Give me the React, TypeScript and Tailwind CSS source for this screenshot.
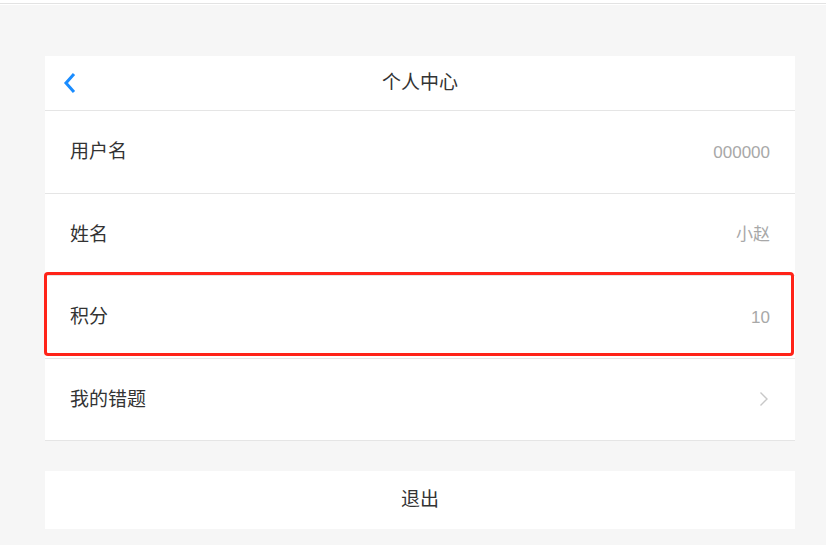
import React from "react";

const font = { fontFamily: '"Liberation Sans", "Noto Sans CJK SC", sans-serif' };

function Row({ label, value, arrow }: { label: string; value?: string; arrow?: boolean }) {
  return (
    <div className="flex h-[82.5px] items-center justify-between border-b border-[#e5e5e5] pl-[25px] pr-[25px]">
      <span className="pt-[1px] text-[19px] text-[#333]">{label}</span>
      {arrow ? (
        <svg width="10" height="16" viewBox="0 0 10 16" className="mr-[1px]">
          <path d="M1.5 1.5 L8 8 L1.5 14.5" fill="none" stroke="#c8c8c8" strokeWidth="1.4" />
        </svg>
      ) : (
        <span className="pt-[1px] text-[17px] text-[#a8a8a8]">{value}</span>
      )}
    </div>
  );
}

export default function App() {
  return (
    <div className="min-h-[545px] bg-white" style={font}>
      <div className="h-[3px] bg-white" />
      <div className="h-[1px] bg-[#e3e3e3]" />
      <div className="h-[1px] bg-white" />
      <div className="min-h-[540px] bg-[#f6f6f6] pl-[45px] pr-[31px] pt-[51px]">
        <div className="relative bg-white">
          <div className="relative flex h-[55px] items-center justify-center border-b border-[#e5e5e5]">
            <svg width="14" height="22" viewBox="0 0 14 22" className="absolute left-[18px] top-[16px]">
              <path d="M11 2 L3 11 L11 20" fill="none" stroke="#1a8cff" strokeWidth="3" />
            </svg>
            <span className="pt-[1px] text-[19px] text-[#333]">个人中心</span>
          </div>
          <Row label="用户名" value="000000" />
          <Row label="姓名" value="小赵" />
          <Row label="积分" value="10" />
          <Row label="我的错题" arrow />
          <div className="pointer-events-none absolute left-[-1px] right-[1px] top-[216px] h-[84px] rounded-[4px] border-[3.5px] border-[#ff2318]" />
        </div>
        <div className="mt-[30px] flex h-[58px] items-center justify-center bg-white">
          <span className="pt-[1px] text-[19px] text-[#333]">退出</span>
        </div>
      </div>
    </div>
  );
}
